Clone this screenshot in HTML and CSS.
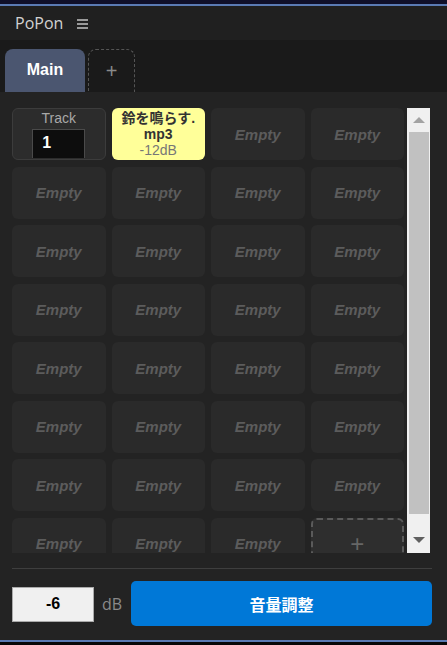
FILE: index.html
```html
<!DOCTYPE html>
<html lang="ja">
  <head>
    <meta charset="UTF-8" />
    <meta name="viewport" content="width=device-width, initial-scale=1.0" />
    <title>PoPon</title>
    <link rel="stylesheet" href="styles.css">
  </head>
  <body>
    <div class="window">
      <!-- Header -->
      <div class="header">
        <span class="title">PoPon</span>
        <span class="menu"><i></i><i></i><i></i></span>
      </div>

      <!-- Tabs -->
      <div class="tabs">
        <div class="tab active">Main</div>
        <div class="tab add">+</div>
      </div>

      <!-- Pads -->
      <div class="content">
        <div class="pads-wrap">
          <div class="pads">
            <div class="cell track">
              <span class="track-label">Track</span>
              <span class="track-input">1</span>
            </div>
            <div class="cell sound">
              <span>鈴を鳴らす.</span>
              <span>mp3</span>
              <span class="db">-12dB</span>
            </div>
            <div class="cell">Empty</div>
            <div class="cell">Empty</div>

            <div class="cell">Empty</div>
            <div class="cell">Empty</div>
            <div class="cell">Empty</div>
            <div class="cell">Empty</div>

            <div class="cell">Empty</div>
            <div class="cell">Empty</div>
            <div class="cell">Empty</div>
            <div class="cell">Empty</div>

            <div class="cell">Empty</div>
            <div class="cell">Empty</div>
            <div class="cell">Empty</div>
            <div class="cell">Empty</div>

            <div class="cell">Empty</div>
            <div class="cell">Empty</div>
            <div class="cell">Empty</div>
            <div class="cell">Empty</div>

            <div class="cell">Empty</div>
            <div class="cell">Empty</div>
            <div class="cell">Empty</div>
            <div class="cell">Empty</div>

            <div class="cell">Empty</div>
            <div class="cell">Empty</div>
            <div class="cell">Empty</div>
            <div class="cell">Empty</div>

            <div class="cell">Empty</div>
            <div class="cell">Empty</div>
            <div class="cell">Empty</div>
            <div class="cell add-cell">+</div>
          </div>
          <div class="scrollbar">
            <span class="arrow up"></span>
            <span class="thumb"></span>
            <span class="arrow down"></span>
          </div>
        </div>

        <div class="divider"></div>

        <div class="volume">
          <span class="db-input">-6</span>
          <span class="db-unit">dB</span>
          <button class="apply">音量調整</button>
        </div>
      </div>
    </div>
  </body>
</html>
```

FILE: styles.css
```css
body {
  margin: 0;
  background-color: #000;
  font-family: "Liberation Sans", Arial, "Noto Sans CJK JP", sans-serif;
  color: #ccc;
}

.window {
  width: 447px;
  height: 645px;
  box-sizing: border-box;
  border-top: 4px solid #10102a;
  border-bottom: 3px solid #080808;
  background-color: #232323;
  display: flex;
  flex-direction: column;
  overflow: hidden;
}

.header {
  height: 34px;
  border-top: 2px solid #5b7bb4;
  background-color: #202020;
  display: flex;
  align-items: center;
  padding-left: 15px;
}

.title {
  font-family: "Open Sans", sans-serif;
  font-size: 16px;
  color: #d2d2d2;
}

.menu {
  display: flex;
  flex-direction: column;
  gap: 2px;
  margin-left: 14px;
  margin-top: 2px;
}

.menu i {
  display: block;
  width: 11px;
  height: 2px;
  background-color: #9a9a9a;
}

.tabs {
  height: 52px;
  background-color: #1a1a1a;
  display: flex;
  align-items: flex-end;
  gap: 3px;
  padding-left: 5px;
}

.tab {
  height: 43px;
  box-sizing: border-box;
  border-radius: 8px 8px 0 0;
  display: flex;
  align-items: center;
  justify-content: center;
}

.tab.active {
  width: 80px;
  background-color: #4b5670;
  color: #fff;
  font-weight: bold;
  font-size: 16px;
  padding-bottom: 2px;
}

.tab.add {
  width: 47px;
  border: 1px dashed #555;
  border-bottom: none;
  color: #8a8a8a;
  font-size: 20px;
}

.content {
  flex: 1;
  padding: 16px 15px 0 12px;
  background-color: #232323;
  border-bottom: 2px solid #5b7bb4;
}

.pads-wrap {
  display: flex;
  height: 445px;
}

.pads {
  width: 392px;
  height: 445px;
  overflow: hidden;
  display: grid;
  grid-template-columns: repeat(4, 1fr);
  grid-auto-rows: 52px;
  column-gap: 6px;
  row-gap: 6.5px;
}

.cell {
  background-color: #2a2a2a;
  border-radius: 6px;
  display: flex;
  align-items: center;
  justify-content: center;
  font-size: 15px;
  font-weight: bold;
  font-style: italic;
  color: #5c5c5c;
}

.cell.track {
  box-sizing: border-box;
  border: 1px solid #3c3c3c;
  background-color: #2c2c2c;
  flex-direction: column;
  justify-content: flex-start;
  font-style: normal;
  font-weight: normal;
}

.track-label {
  font-size: 14px;
  color: #a8a8a8;
  margin-top: 1px;
}

.track-input {
  width: 53px;
  height: 29px;
  box-sizing: border-box;
  margin-top: 3px;
  background-color: #0d0d0d;
  border: 1px solid #4a4a4a;
  border-bottom: none;
  color: #fff;
  font-size: 16px;
  font-weight: bold;
  font-style: normal;
  padding: 4px 0 0 9px;
}

.cell.sound {
  background-color: #ffff99;
  flex-direction: column;
  font-style: normal;
  font-size: 14px;
  line-height: 16px;
  color: #333;
}

.cell.sound .db {
  color: #777;
  font-weight: normal;
}

.cell.add-cell {
  box-sizing: border-box;
  border: 2px dashed #5a5a5a;
  background-color: #2e2e2e;
  font-style: normal;
  font-weight: normal;
  font-size: 24px;
  color: #666;
}

.scrollbar {
  width: 23px;
  margin-left: 3px;
  background-color: #f0f0f0;
  display: flex;
  flex-direction: column;
  align-items: center;
}

.arrow {
  width: 0;
  height: 0;
  border-left: 6px solid transparent;
  border-right: 6px solid transparent;
}

.arrow.up {
  border-bottom: 6px solid #a3a3a3;
  margin: 9px 0 9px;
}

.arrow.down {
  border-top: 6px solid #606060;
  margin-top: 23px;
}

.thumb {
  width: 20px;
  height: 382px;
  background-color: #c1c1c1;
}

.divider {
  height: 1px;
  background-color: #3e3e3e;
  margin-top: 15px;
}

.volume {
  display: flex;
  align-items: center;
  margin-top: 12px;
}

.db-input {
  width: 82px;
  height: 35px;
  box-sizing: border-box;
  background-color: #f0f0f0;
  border: 1px solid #aaa;
  color: #000;
  font-weight: bold;
  font-size: 16px;
  display: flex;
  align-items: center;
  justify-content: center;
  margin-top: 1px;
}

.db-unit {
  font-family: "Open Sans", sans-serif;
  font-size: 16px;
  color: #8a8a8a;
  margin-left: 8px;
  width: 29px;
}

.apply {
  flex: 1;
  height: 45px;
  border: none;
  border-radius: 5px;
  background-color: #0078d7;
  color: #fff;
  font-family: "Noto Sans CJK JP", sans-serif;
  font-weight: bold;
  font-size: 16px;
}
```
